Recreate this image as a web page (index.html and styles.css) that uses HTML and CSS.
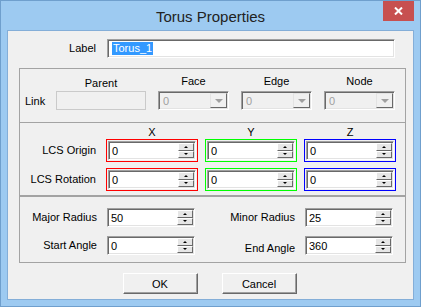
FILE: index.html
```html
<!DOCTYPE html>
<html lang="en">
<head>
  <meta charset="UTF-8" />
  <title>Torus Properties</title>
  <link rel="stylesheet" href="styles.css">
</head>
<body>
  <div class="window">
    <div class="titlebar">
      <span class="title">Torus Properties</span>
      <button class="close" aria-label="Close">
        <svg width="9" height="8" viewBox="0 0 9 8"><path d="M1 0.5 L8 7.5 M8 0.5 L1 7.5" stroke="#fff" stroke-width="2"/></svg>
      </button>
    </div>

    <div class="client">
      <div class="label-row">
        <label class="lbl">Label</label>
        <div class="edit"><span class="sel">Torus_1</span></div>
      </div>

      <div class="group link-group">
        <span></span>
        <span class="hdr hdr-parent">Parent</span>
        <span class="hdr">Face</span>
        <span class="hdr">Edge</span>
        <span class="hdr">Node</span>

        <span class="link-lbl">Link</span>
        <div class="parent"></div>
        <div class="combo"><span>0</span><i class="drop"></i></div>
        <div class="combo"><span>0</span><i class="drop"></i></div>
        <div class="combo"><span>0</span><i class="drop"></i></div>
      </div>

      <div class="group lcs-group">
        <span></span>
        <span class="hdr">X</span>
        <span class="hdr">Y</span>
        <span class="hdr">Z</span>

        <span class="lbl">LCS Origin</span>
        <div class="coord red"><div class="spin"><span>0</span><i class="arrows"><b class="up"></b><b class="down"></b></i></div></div>
        <div class="coord green"><div class="spin"><span>0</span><i class="arrows"><b class="up"></b><b class="down"></b></i></div></div>
        <div class="coord blue"><div class="spin"><span>0</span><i class="arrows"><b class="up"></b><b class="down"></b></i></div></div>

        <span class="lbl">LCS Rotation</span>
        <div class="coord red"><div class="spin"><span>0</span><i class="arrows"><b class="up"></b><b class="down"></b></i></div></div>
        <div class="coord green"><div class="spin"><span>0</span><i class="arrows"><b class="up"></b><b class="down"></b></i></div></div>
        <div class="coord blue"><div class="spin"><span>0</span><i class="arrows"><b class="up"></b><b class="down"></b></i></div></div>
      </div>

      <div class="group dim-group">
        <span class="lbl">Major Radius</span>
        <div class="spin"><span>50</span><i class="arrows"><b class="up"></b><b class="down"></b></i></div>
        <span class="lbl">Minor Radius</span>
        <div class="spin"><span>25</span><i class="arrows"><b class="up"></b><b class="down"></b></i></div>

        <span class="lbl">Start Angle</span>
        <div class="spin"><span>0</span><i class="arrows"><b class="up"></b><b class="down"></b></i></div>
        <span class="lbl lbl-low">End Angle</span>
        <div class="spin"><span>360</span><i class="arrows"><b class="up"></b><b class="down"></b></i></div>
      </div>

      <div class="buttons">
        <button class="btn">OK</button>
        <button class="btn">Cancel</button>
      </div>
    </div>
  </div>
</body>
</html>
```

FILE: styles.css
```css
* {
  box-sizing: border-box;
}

body {
  margin: 0;
  font-family: "Liberation Sans", Arial, sans-serif;
  font-size: 11px;
  color: #000;
}

.window {
  width: 421px;
  height: 307px;
  background: #9dcaf1;
  border: 1px solid #6f9fcd;
  padding: 0 6px 6px;
  display: flex;
  flex-direction: column;
}

.titlebar {
  height: 29px;
  display: grid;
  grid-template-columns: 1fr auto 1fr;
}

.title {
  grid-column: 2;
  align-self: center;
  font-size: 15px;
  color: #222;
  padding-top: 1px;
}

.close {
  grid-column: 3;
  justify-self: end;
  width: 31px;
  height: 20px;
  background: #c75050;
  border: 0;
  padding: 0;
  display: flex;
  align-items: center;
  justify-content: center;
}

.close svg {
  display: block;
}

.client {
  flex: 1;
  background: #f0f0f0;
  border: 1px solid #84aed8;
  padding: 8px 7px 0 11px;
  display: flex;
  flex-direction: column;
}

/* sunken classic edit */
.edit,
.spin,
.combo {
  height: 19px;
  border: 1px solid;
  border-color: #a0a0a0 #fff #fff #a0a0a0;
  box-shadow: inset 1px 1px 0 #696969, inset -1px -1px 0 #e3e3e3;
  display: flex;
  align-items: center;
}

.label-row {
  display: grid;
  grid-template-columns: 88px 288px;
  height: 19px;
  margin-bottom: 10px;
}

.lbl {
  text-align: right;
  padding-right: 11px;
  line-height: 19px;
  white-space: nowrap;
}

.edit {
  background: #fff;
  padding-left: 4px;
}

.sel {
  background: #3399ff;
  color: #fff;
  line-height: 13px;
  padding: 0 1px;
}

.group {
  border: 1px solid #a3a3a3;
  display: grid;
}

.link-group {
  height: 55px;
  padding: 5px 0 12px;
  grid-template-columns: 24px 90px 71px 71px 71px;
  grid-template-rows: 14px 19px;
  column-gap: 12px;
  row-gap: 3px;
}

.hdr {
  text-align: center;
  line-height: 14px;
}

.hdr-parent {
  padding-top: 2px;
}

.link-lbl {
  padding-left: 5px;
  line-height: 21px;
}

.parent {
  height: 19px;
  border: 1px solid #cacaca;
  background: #f0f0f0;
}

.combo {
  background: #f0f0f0;
  color: #a0a0a0;
  padding-left: 4px;
  justify-content: space-between;
}

.drop {
  width: 17px;
  height: 15px;
  margin-right: 1px;
  border: 1px solid;
  border-color: #e3e3e3 #696969 #696969 #e3e3e3;
  background: #f0f0f0;
  display: flex;
  align-items: center;
  justify-content: center;
}

.drop::after {
  content: "";
  border-left: 4px solid transparent;
  border-right: 4px solid transparent;
  border-top: 4px solid #a0a0a0;
}

.lcs-group {
  height: 74px;
  margin-top: -1px;
  padding: 2px 0 4px;
  grid-template-columns: 79px 92px 92px 92px;
  grid-template-rows: 14px 23px 29px;
  column-gap: 7px;
  align-items: end;
}

.lcs-group .lbl {
  padding-right: 3px;
  line-height: 23px;
}

.coord {
  height: 23px;
  border: 1px solid;
  padding: 1px;
}

.red { border-color: #ff0000; }
.green { border-color: #00ff00; }
.blue { border-color: #0000ff; }

.spin {
  background: #fff;
  padding-left: 3px;
  justify-content: space-between;
}

.arrows {
  width: 16px;
  height: 15px;
  margin-right: 1px;
  display: flex;
  flex-direction: column;
}

.arrows b {
  flex: 1;
  background: #e6e6e6;
  border: 1px solid;
  border-color: #fff #696969 #696969 #fff;
  display: flex;
  align-items: center;
  justify-content: center;
}

.up::after {
  content: "";
  border-left: 2px solid transparent;
  border-right: 2px solid transparent;
  border-bottom: 2px solid #000;
}

.down::after {
  content: "";
  border-left: 2px solid transparent;
  border-right: 2px solid transparent;
  border-top: 2px solid #000;
}

.dim-group {
  height: 67px;
  padding: 11px 0 7px;
  grid-template-columns: 87px 88px 110px 88px;
  grid-template-rows: 19px 19px;
  row-gap: 9px;
}

.dim-group .lbl {
  padding-right: 10px;
}

.lbl-low {
  padding-top: 3px;
}

.buttons {
  display: flex;
  justify-content: center;
  gap: 24px;
  margin-top: 10px;
  padding-right: 6px;
}

.btn {
  width: 75px;
  height: 21px;
  font: inherit;
  color: #000;
  background: #f0f0f0;
  border: 1px solid;
  border-color: #fff #696969 #696969 #fff;
  box-shadow: inset -1px -1px 0 #a0a0a0;
  padding: 0;
}
```
